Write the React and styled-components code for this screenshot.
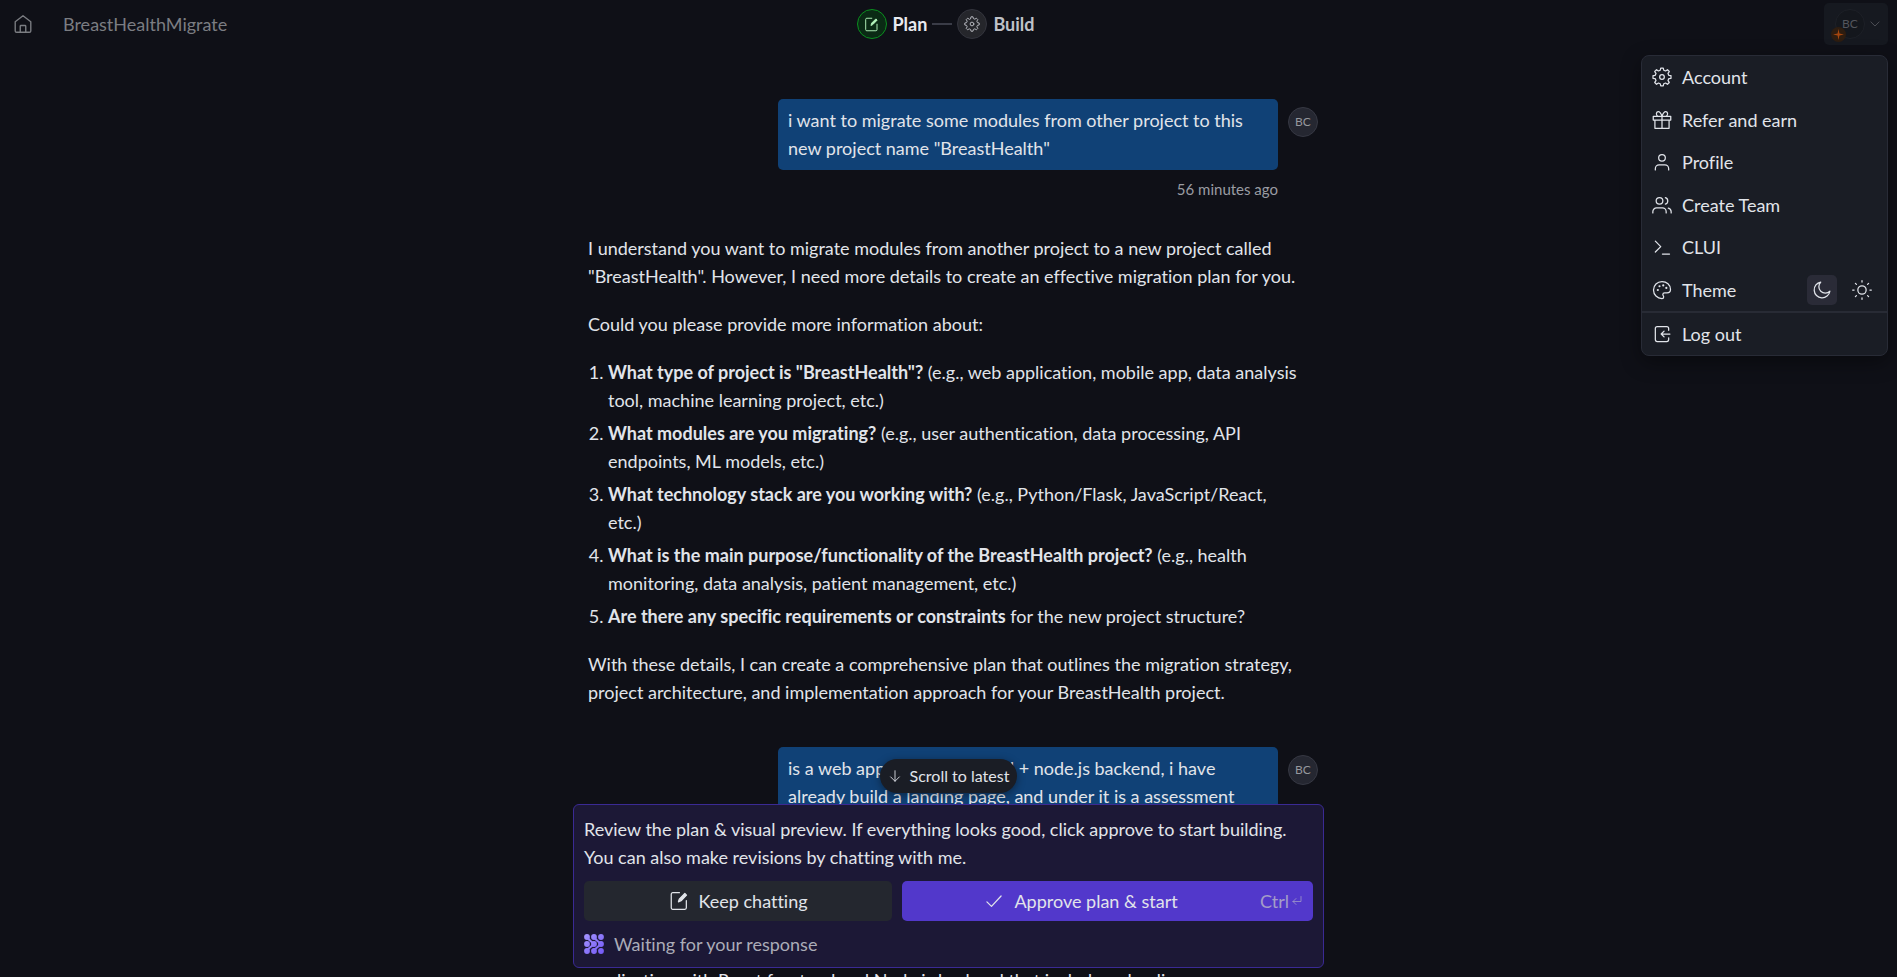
import React from "react";
import styled, { createGlobalStyle, css } from "styled-components";

const GlobalStyle = createGlobalStyle`
  *, *::before, *::after { box-sizing: border-box; }
  body {
    margin: 0;
    background: #0f1017;
    color: #e1e4ea;
    font-family: Lato, "Open Sans", sans-serif;
    font-size: 18px;
    line-height: 28px;
    font-variant-ligatures: none;
  }
  button { font: inherit; color: inherit; border: 0; padding: 0; background: none; cursor: pointer; }
  p, ol { margin: 0; }
`;

/* ---------- icons ---------- */

const Svg = styled.svg.attrs((p) => ({ viewBox: p.viewBox || "0 0 24 24", "aria-hidden": true }))`
  width: ${(p) => p.$size || 20}px;
  height: ${(p) => p.$size || 20}px;
  flex: none;
  display: block;
  fill: none;
  stroke: currentColor;
  stroke-width: 1.5;
  stroke-linecap: round;
  stroke-linejoin: round;
`;

const gearPath = (() => {
  const points = [];
  for (let i = 0; i < 8; i++) {
    const a = (i * Math.PI) / 4;
    [[-0.25, 8.4], [-0.14, 10.9], [0.14, 10.9], [0.25, 8.4]].forEach(([d, r]) => {
      points.push(`${(12 + r * Math.sin(a + d)).toFixed(2)} ${(12 - r * Math.cos(a + d)).toFixed(2)}`);
    });
  }
  return `M${points.join("L")}Z`;
})();

const HomeIcon = () => (
  <Svg $size={22}>
    <path d="M3.500 9.600 12 3l8.500 6.600V19.500a1.500 1.500 0 0 1-1.500 1.500H5a1.500 1.500 0 0 1-1.500-1.500ZM9 21v-6.500a.8.8 0 0 1 .8-.8h4.400a.8.8 0 0 1 .8.8V21" />
  </Svg>
);
const GearIcon = ({ size }) => (
  <Svg $size={size}>
    <path d={gearPath} />
    <circle cx="12" cy="12" r="2.800" />
  </Svg>
);
const EditIcon = ({ size }) => (
  <Svg $size={size}>
    <path d="M12.500 2H4.500A1.800 1.800 0 0 0 2.700 3.800v16.400A1.800 1.800 0 0 0 4.500 22h14.500a1.800 1.800 0 0 0 1.800-1.800V11.500" />
    <path d="M11.300 13l1-3.300L19 3l2 2-6.500 6.700Z" fill="currentColor" />
  </Svg>
);
const GiftIcon = () => (
  <Svg>
    <path d="M1.500 7.500h21v4.500h-21ZM3.500 12v10h17V12M12 7.500v14.500M12 7.500C10.500 3.500 9 1.800 7.300 2 4.800 2.400 4.500 6 7 7.500M12 7.500c1.500-4 3-5.700 4.700-5.500C19.200 2.400 19.500 6 17 7.500" />
  </Svg>
);
const UserIcon = () => (
  <Svg>
    <circle cx="12" cy="7" r="4" />
    <path d="M4 21.500v-1.500a4.500 4.500 0 0 1 4.500-4.500h7a4.500 4.500 0 0 1 4.500 4.500v1.500" />
  </Svg>
);
const TeamIcon = () => (
  <Svg>
    <circle cx="9" cy="7" r="4" />
    <path d="M1 21.500v-1.500a4.500 4.500 0 0 1 4.500-4.500h7a4.500 4.500 0 0 1 4.500 4.500v1.500M16 3.200a4 4 0 0 1 0 7.700M19.500 15.700a4.500 4.500 0 0 1 3.500 4.300v1.500" />
  </Svg>
);
const ShellIcon = () => (
  <Svg>
    <path d="M4 5l6.500 6.500L4 18M12.500 20.500h8.500" />
  </Svg>
);
const PaletteIcon = () => (
  <Svg>
    <path d="M12 1.800C6.300 1.800 1.800 6.300 1.800 12S6.300 22.200 12 22.200c1.300 0 2-.9 2-1.900 0-1.300-1-1.600-1-3 0-1.200 1-2 2.200-2h2.800c2.500 0 4.200-1.600 4.200-4C22.200 5.700 17.600 1.800 12 1.800Z" />
    <g fill="currentColor" stroke="none">
      <circle cx="7" cy="12" r="1.300" />
      <circle cx="9" cy="7.500" r="1.300" />
      <circle cx="13.500" cy="6.500" r="1.300" />
      <circle cx="17.200" cy="9.500" r="1.300" />
    </g>
  </Svg>
);
const MoonIcon = () => (
  <Svg>
    <path d="M21.500 13.500A9.500 9.500 0 1 1 10.500 2.500 7.500 7.500 0 0 0 21.500 13.500Z" />
  </Svg>
);
const SunIcon = () => (
  <Svg>
    <circle cx="12" cy="12" r="5" />
    <path d="M12 .800v1.700M12 21.500v1.700M.8 12h1.700M21.500 12h1.700M4.100 4.100l1.200 1.200M18.700 18.700l1.200 1.200M4.100 19.900l1.200-1.200M18.700 5.300l1.200-1.200" />
  </Svg>
);
const LogOutIcon = () => (
  <Svg>
    <path d="M20 7.500V5.300A2.300 2.300 0 0 0 17.700 3H6.300A2.300 2.300 0 0 0 4 5.300v13.400A2.300 2.300 0 0 0 6.300 21h11.400a2.300 2.300 0 0 0 2.300-2.300v-2.200M21.500 12H11M14.500 8.500L11 12l3.500 3.500" />
  </Svg>
);
const ChevronIcon = () => (
  <Svg $size={14}>
    <path d="M5 8.500l7 7 7-7" />
  </Svg>
);
const CheckIcon = () => (
  <Svg>
    <path d="M3.500 13l5.500 5.500L20.500 6" />
  </Svg>
);
const ArrowDownIcon = () => (
  <Svg $size={14}>
    <path d="M12 3v18M4.500 13.500L12 21l7.500-7.500" />
  </Svg>
);
const ReturnIcon = () => (
  <Svg $size={12}>
    <path d="M20 3v10H4M10 7l-6 6 6 6" />
  </Svg>
);
const AgentIcon = () => (
  <Svg viewBox="0 0 20 20">
    <defs>
      <linearGradient id="agent" x1="0" y1="0" x2="20" y2="20" gradientUnits="userSpaceOnUse">
        <stop offset="0" stopColor="#a596ff" />
        <stop offset="1" stopColor="#7257f5" />
      </linearGradient>
    </defs>
    <g fill="url(#agent)" stroke="none">
      {[3, 10, 17].flatMap((x) => [3, 10, 17].map((y) => <circle key={`${x}-${y}`} cx={x} cy={y} r="2.900" />))}
    </g>
    <path
      d="M3.500 3.500C5 7 8 7 9.500 10 8 13 5 13 3.500 16.500M10.500 3.500C12 7 15 7 16.500 10 15 13 12 13 10.500 16.500"
      stroke="url(#agent)"
      strokeWidth="2"
    />
  </Svg>
);

/* ---------- shell ---------- */

const Page = styled.div`
  display: flex;
  flex-direction: column;
  height: 100vh;
  overflow: hidden;
  position: relative;
`;

const Header = styled.header`
  display: grid;
  grid-template-columns: 1fr auto 1fr;
  align-items: center;
  height: 48px;
  flex: none;
  padding: 0 9px 0 3px;
`;

const Crumbs = styled.nav`
  display: flex;
  align-items: center;
  gap: 29px;
  padding-left: 9px;
  color: #7b7d82;
`;

const CrumbLink = styled.a`
  color: inherit;
  text-decoration: none;
`;

const Stepper = styled.div`
  display: flex;
  align-items: center;
  gap: 5px;
`;

const StepButton = styled.button`
  display: flex;
  align-items: center;
  gap: 6px;
  font-weight: 700;
  color: ${(p) => (p.$active ? "#e8eaf0" : "#bfc2c8")};
`;

const StepDot = styled.span`
  display: grid;
  place-items: center;
  width: 30px;
  height: 30px;
  border-radius: 50%;
  border: 1px solid ${(p) => (p.$active ? "#0a8f1f" : "#33343d")};
  background: ${(p) => (p.$active ? "#0a2a14" : "#25262b")};
  color: ${(p) => (p.$active ? "#b5f5bd" : "#b4b6bc")};
`;

const StepLine = styled.span`
  width: 20px;
  height: 2px;
  background: #3a3c47;
`;

const Avatar = styled.span`
  display: grid;
  place-items: center;
  width: 30px;
  height: 30px;
  flex: none;
  border-radius: 50%;
  border: 1px solid #363843;
  background: #252731;
  color: #96989e;
  font-size: 12px;
  line-height: 16px;
`;

const AccountButton = styled.button`
  justify-self: end;
  display: flex;
  align-items: center;
  gap: 3px;
  width: 64px;
  height: 42px;
  padding: 0 6px 0 11px;
  border-radius: 5px;
  background: #161920;
  color: #53555c;

  ${Avatar} {
    position: relative;
    background: #14171d;
    border-color: #1d2027;
    color: #53555c;
  }
`;

const Badge = styled.span`
  position: absolute;
  left: -5px;
  bottom: -4px;
  display: grid;
  place-items: center;
  width: 15px;
  height: 15px;
  border-radius: 50%;
  background: #2e1d10;
  color: #a5460f;

  svg { stroke: none; fill: currentColor; }
`;

/* ---------- account menu ---------- */

const Menu = styled.div`
  position: absolute;
  top: 55px;
  right: 9px;
  z-index: 3;
  width: 247px;
  border: 1px solid #282b36;
  border-radius: 8px;
  background: #1a1d25;
  box-shadow: 0 6px 20px rgba(0, 0, 0, 0.4);
`;

const MenuGroup = styled.div`
  display: grid;
  grid-template-rows: repeat(6, 1fr);
  height: 255px;
`;

const MenuDivider = styled.hr`
  height: 2px;
  margin: 0;
  border: 0;
  background: #282b35;
`;

const rowStyles = css`
  display: flex;
  align-items: center;
  gap: 10px;
  width: 100%;
  padding: 0 10px;
  text-align: left;
`;

const MenuItem = styled.button`
  ${rowStyles}
  min-height: 42px;
`;

const ThemeRow = styled.div`
  ${rowStyles}
`;

const ThemeLabel = styled.span`
  flex: 1;
`;

const ThemeButton = styled.button`
  display: grid;
  place-items: center;
  width: 30px;
  height: 30px;
  border-radius: 5px;
  background: ${(p) => (p.$active ? "#2a2b37" : "transparent")};
`;

/* ---------- conversation ---------- */

const Thread = styled.main`
  flex: 1;
  min-height: 0;
  overflow-y: auto;
  scrollbar-width: none;
`;

const Column = styled.div`
  display: flex;
  flex-direction: column;
  width: 100%;
  max-width: 751px;
  margin: 0 auto;
  padding: 51px 6px 180px 15px;
`;

const UserMessage = styled.section`
  display: grid;
  grid-template-columns: minmax(0, 500px) 30px;
  justify-content: end;
  column-gap: 10px;
  row-gap: 9px;

  ${Avatar} { margin-top: 8px; }
`;

const Bubble = styled.p`
  min-height: ${(p) => (p.$tall ? 127 : 0)}px;
  padding: 7px 10px 8px;
  border-radius: 5px;
  background: #104176;
`;

const Time = styled.time`
  text-align: right;
  font-size: 15px;
  line-height: 20px;
  color: #9a9ca3;
`;

const AgentMessage = styled.section`
  display: flex;
  flex-direction: column;
  gap: 20px;
  max-width: 714px;
  margin: 35px 0 41px;
`;

const Questions = styled.ol`
  display: flex;
  flex-direction: column;
  gap: 5px;
  padding-left: 20px;
`;

/* ---------- approval dock ---------- */

const Dock = styled.div`
  position: absolute;
  left: 0;
  right: 0;
  bottom: 9px;
  z-index: 2;
  display: flex;
  flex-direction: column;
  align-items: center;
  gap: 11px;
`;

const ScrollPill = styled.button`
  display: flex;
  align-items: center;
  gap: 8px;
  height: 34px;
  padding: 0 8px;
  border-radius: 17px;
  background: #1a1d25;
  box-shadow: 0 2px 8px rgba(0, 0, 0, 0.4);
  font-size: 16px;
  line-height: 20px;
`;

const Approval = styled.section`
  display: flex;
  flex-direction: column;
  gap: 10px;
  width: 100%;
  max-width: 751px;
  padding: 10px;
  border: 1px solid #3a2a94;
  border-radius: 6px;
  background: #1c1836;
`;

const Actions = styled.div`
  display: grid;
  grid-template-columns: 3fr 4fr;
  gap: 10px;
`;

const ActionButton = styled.button`
  display: flex;
  align-items: center;
  gap: 10px;
  height: 40px;
  padding: 0 10px;
  border-radius: 5px;
  background: ${(p) => (p.$primary ? "#5238cb" : "#24272f")};
`;

const ActionLabel = styled.span`
  flex: 1;
  display: flex;
  align-items: center;
  justify-content: center;
  gap: 10px;
`;

const Shortcut = styled.kbd`
  display: flex;
  align-items: center;
  gap: 2px;
  font-family: inherit;
  font-size: 18px;
  color: #a49dc8;
`;

const Status = styled.div`
  display: flex;
  align-items: center;
  gap: 10px;
  line-height: 26px;
  color: #abacb8;
`;

const menuItems = [
  ["Account", GearIcon],
  ["Refer and earn", GiftIcon],
  ["Profile", UserIcon],
  ["Create Team", TeamIcon],
  ["CLUI", ShellIcon],
];

const questions = [
  ['What type of project is "BreastHealth"?', "(e.g., web application, mobile app, data analysis tool, machine learning project, etc.)"],
  ["What modules are you migrating?", "(e.g., user authentication, data processing, API endpoints, ML models, etc.)"],
  ["What technology stack are you working with?", "(e.g., Python/Flask, JavaScript/React, etc.)"],
  ["What is the main purpose/functionality of the BreastHealth project?", "(e.g., health monitoring, data analysis, patient management, etc.)"],
  ["Are there any specific requirements or constraints", "for the new project structure?"],
];

export default function App() {
  return (
    <Page>
      <GlobalStyle />
      <Header>
        <Crumbs>
          <CrumbLink href="#home" aria-label="Home"><HomeIcon /></CrumbLink>
          <CrumbLink href="#project">BreastHealthMigrate</CrumbLink>
        </Crumbs>
        <Stepper>
          <StepButton $active>
            <StepDot $active><EditIcon size={15} /></StepDot>
            Plan
          </StepButton>
          <StepLine />
          <StepButton>
            <StepDot><GearIcon size={16} /></StepDot>
            Build
          </StepButton>
        </Stepper>
        <AccountButton aria-label="Account menu" aria-expanded="true">
          <Avatar>
            BC
            <Badge>
              <Svg $size={11}><path d="M12 0l2 10 10 2-10 2-2 10-2-10L0 12l10-2Z" /></Svg>
            </Badge>
          </Avatar>
          <ChevronIcon />
        </AccountButton>
      </Header>

      <Menu>
        <MenuGroup>
          {menuItems.map(([label, Icon]) => (
            <MenuItem key={label}><Icon />{label}</MenuItem>
          ))}
          <ThemeRow>
            <PaletteIcon />
            <ThemeLabel>Theme</ThemeLabel>
            <ThemeButton $active aria-label="Dark theme"><MoonIcon /></ThemeButton>
            <ThemeButton aria-label="Light theme"><SunIcon /></ThemeButton>
          </ThemeRow>
        </MenuGroup>
        <MenuDivider />
        <MenuItem><LogOutIcon />Log out</MenuItem>
      </Menu>

      <Thread>
        <Column>
          <UserMessage>
            <Bubble>i want to migrate some modules from other project to this new project name "BreastHealth"</Bubble>
            <Avatar>BC</Avatar>
            <Time>56 minutes ago</Time>
          </UserMessage>
          <AgentMessage>
            <p>
              I understand you want to migrate modules from another project to a new project called
              "BreastHealth". However, I need more details to create an effective migration plan for you.
            </p>
            <p>Could you please provide more information about:</p>
            <Questions>
              {questions.map(([title, detail]) => (
                <li key={title}><strong>{title}</strong> {detail}</li>
              ))}
            </Questions>
            <p>
              With these details, I can create a comprehensive plan that outlines the migration strategy,
              project architecture, and implementation approach for your BreastHealth project.
            </p>
          </AgentMessage>
          <UserMessage>
            <Bubble $tall>
              is a web app - react frontend + node.js backend, i have already build a landing page, and under it is a assessment
            </Bubble>
            <Avatar>BC</Avatar>
            <Time>54 minutes ago</Time>
          </UserMessage>
          <AgentMessage>
            <p>
              I'll create a comprehensive plan for migrating your BreastHealth web<br />
              application with React frontend and Node.js backend that includes a landing
            </p>
          </AgentMessage>
        </Column>
      </Thread>

      <Dock>
        <ScrollPill><ArrowDownIcon />Scroll to latest</ScrollPill>
        <Approval>
          <p>
            Review the plan &amp; visual preview. If everything looks good, click approve to start building.
            You can also make revisions by chatting with me.
          </p>
          <Actions>
            <ActionButton>
              <ActionLabel><EditIcon />Keep chatting</ActionLabel>
            </ActionButton>
            <ActionButton $primary>
              <ActionLabel><CheckIcon />Approve plan &amp; start</ActionLabel>
              <Shortcut>Ctrl<ReturnIcon /></Shortcut>
            </ActionButton>
          </Actions>
          <Status><AgentIcon />Waiting for your response</Status>
        </Approval>
      </Dock>
    </Page>
  );
}
